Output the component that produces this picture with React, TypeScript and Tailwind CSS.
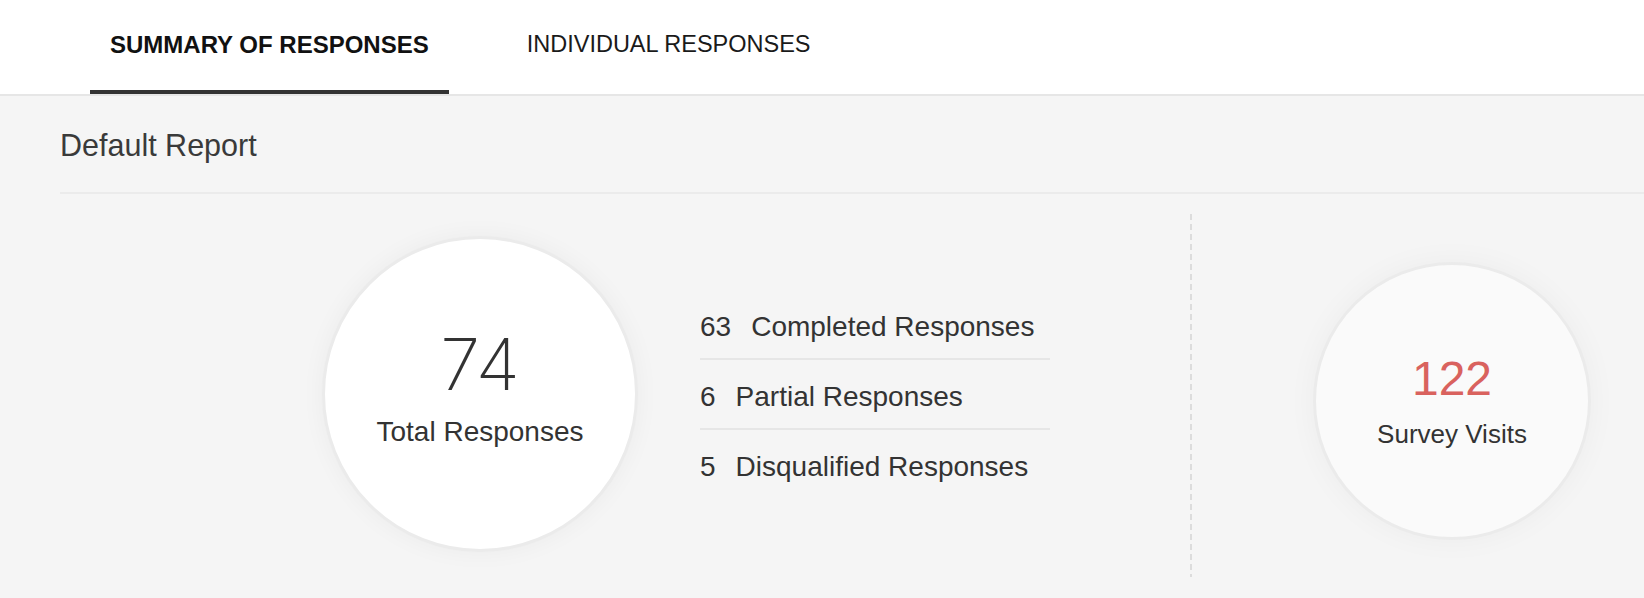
import React from "react";

const stats = [
  { n: "63", label: "Completed Responses" },
  { n: "6", label: "Partial Responses" },
  { n: "5", label: "Disqualified Responses" },
];

export default function App() {
  return (
    <div className="w-[1644px] h-[598px] bg-[#f5f5f5] font-['Liberation_Sans',Arial,sans-serif] text-[#333] overflow-hidden">
      {/* Tabs */}
      <div className="h-[96px] bg-white border-b-2 border-[#e6e6e6] flex pl-[90px]">
        <div className="h-full px-[20px] pt-[33px] border-b-4 border-[#333]">
          <span className="block text-[24px] leading-none font-bold text-[#111]">SUMMARY OF RESPONSES</span>
        </div>
        <div className="h-full ml-[58px] px-[20px] pt-[33px]">
          <span className="block text-[23.5px] leading-none text-[#1a1a1a]">INDIVIDUAL RESPONSES</span>
        </div>
      </div>

      {/* Report */}
      <div className="ml-[60px]">
        <div className="h-[98px] border-b-2 border-[#ebebeb] pt-[34px]">
          <h1 className="text-[30.5px] leading-none text-[#3a3a3a]">Default Report</h1>
        </div>

        <div className="flex items-start pt-[20px]">
          {/* Left section */}
          <div className="w-[1130px] h-[359px] flex items-center pl-[262px]">
            <div className="w-[316px] h-[316px] rounded-full bg-white border-[3px] border-[#ebebeb] shadow-[0_0_24px_rgba(0,0,0,0.045)] flex flex-col items-center justify-center pb-[14px]">
              <div className="text-[72px] leading-none font-['Inter',sans-serif] font-extralight text-[#333]">74</div>
              <div className="mt-[18px] text-[28px] leading-none text-[#333]">Total Responses</div>
            </div>

            <div className="ml-[62px] w-[350px] flex flex-col">
              {stats.map((s, i) => (
                <div
                  key={s.label}
                  className={
                    i < stats.length - 1
                      ? "h-[70px] pt-[6px] border-b-2 border-[#e6e6e6] flex items-center"
                      : "h-[68px] pt-[6px] flex items-center"
                  }
                >
                  <span className="text-[28px] leading-none text-[#333]">{s.n}</span>
                  <span className="ml-[20px] text-[28px] leading-none text-[#333]">{s.label}</span>
                </div>
              ))}
            </div>
          </div>

          {/* Divider */}
          <div className="w-[2px] h-[363px] bg-[repeating-linear-gradient(to_bottom,#dcdcdc_0px,#dcdcdc_6px,transparent_6px,transparent_10px)]" />

          {/* Right section */}
          <div className="flex-1 h-[359px] flex items-center pl-[121px]">
            <div className="mt-[15px] w-[278px] h-[278px] rounded-full bg-[#fafafa] border-[3px] border-[#ebebeb] shadow-[0_0_30px_rgba(0,0,0,0.04)] flex flex-col items-center justify-center">
              <div className="text-[48px] leading-none text-[#d9625e]">122</div>
              <div className="mt-[18px] text-[26px] leading-none text-[#333]">Survey Visits</div>
            </div>
          </div>
        </div>
      </div>
    </div>
  );
}
